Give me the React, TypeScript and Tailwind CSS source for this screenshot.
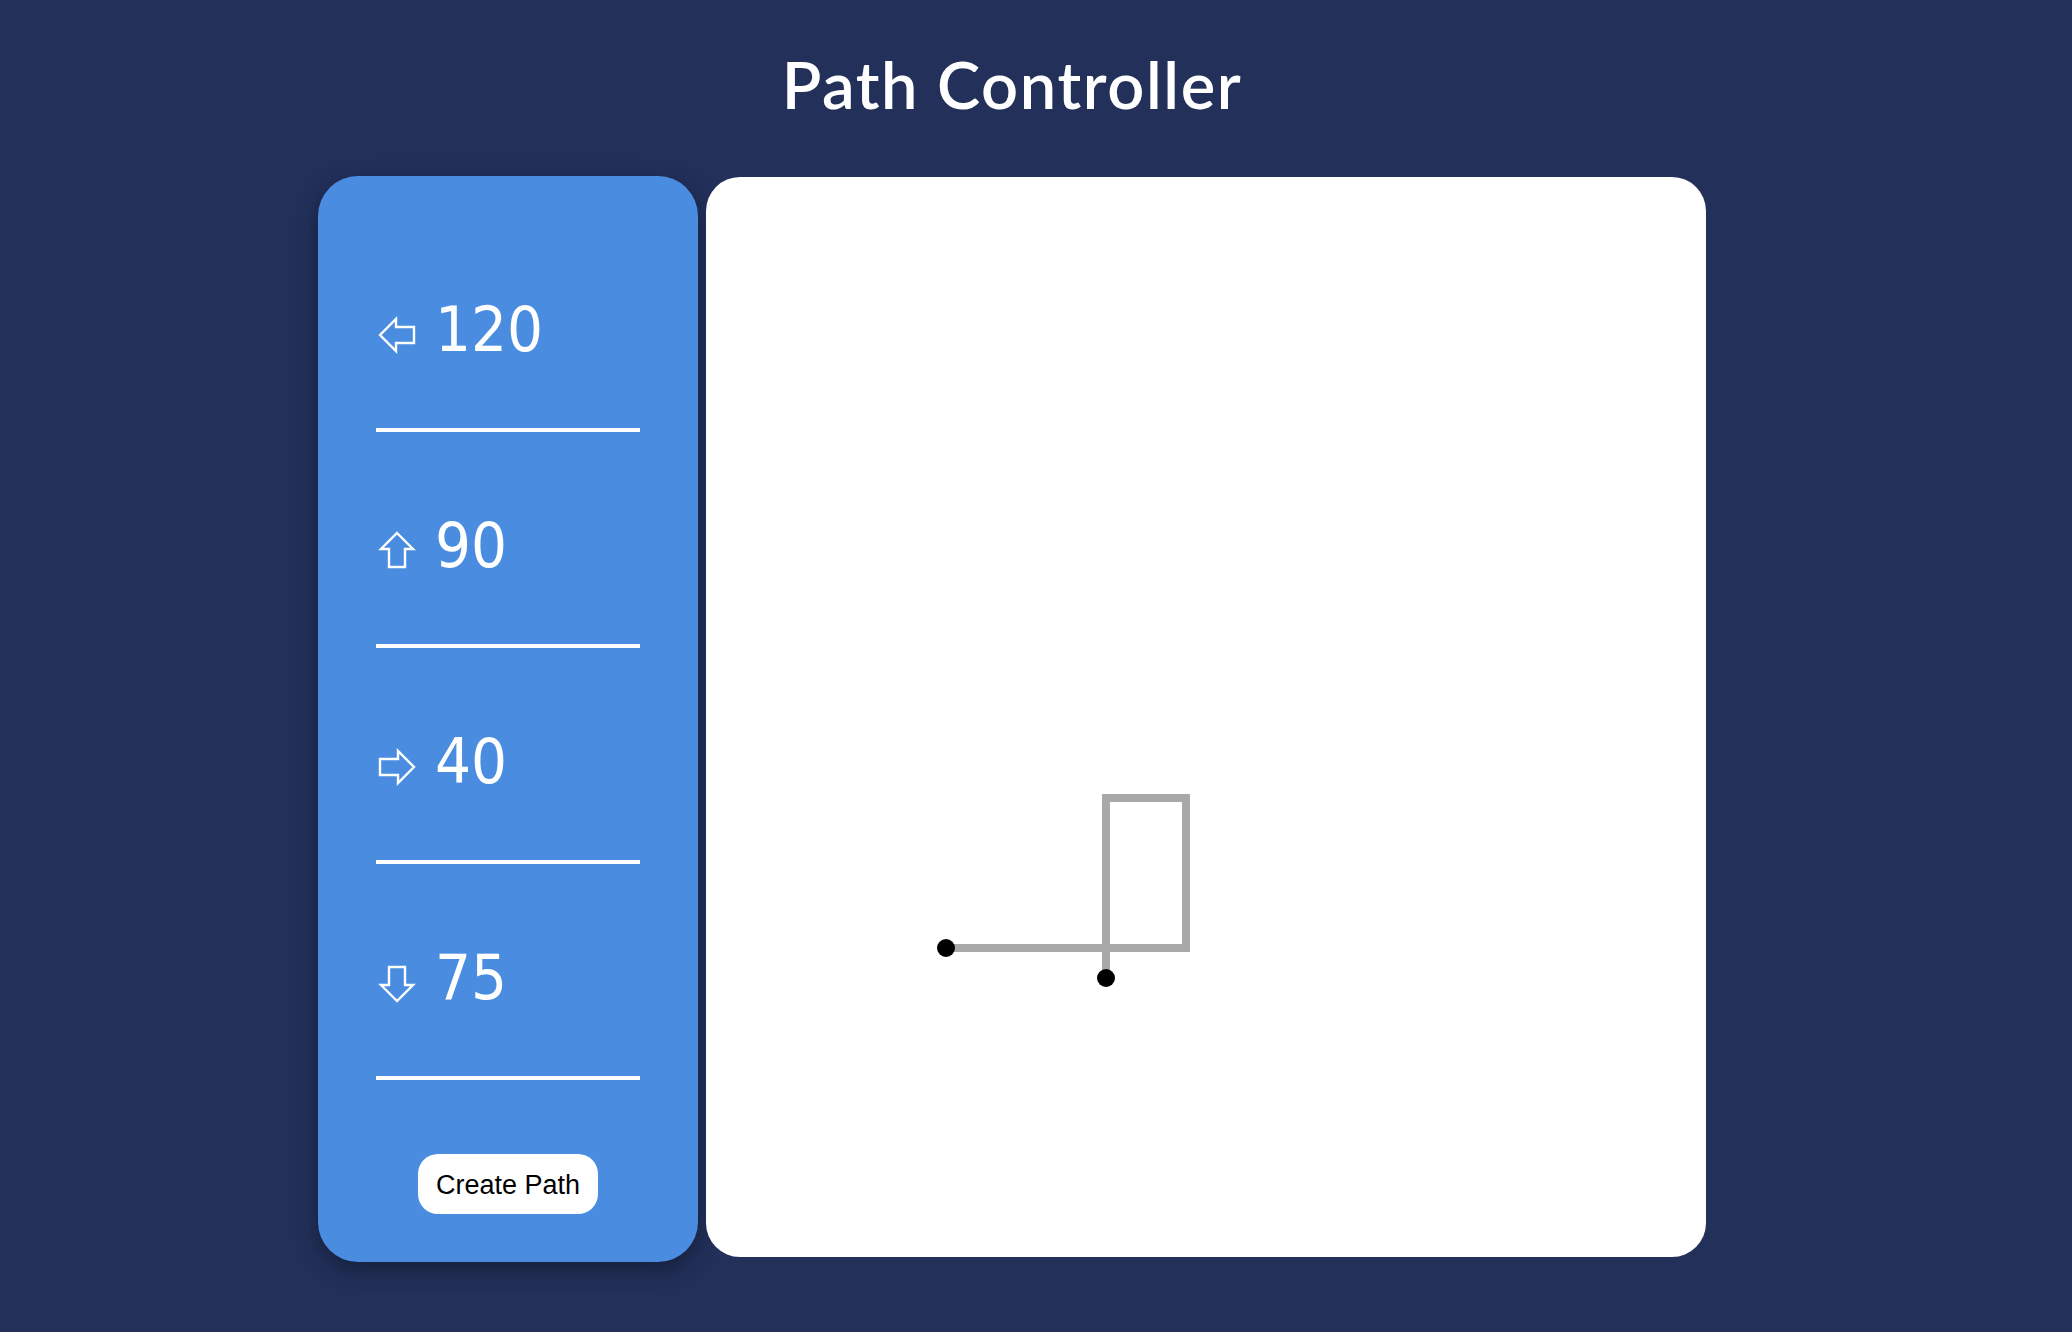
import React from "react";

type Dir = "left" | "up" | "right" | "down";

function Arrow({ dir }: { dir: Dir }) {
  const rot = dir === "left" ? 0 : dir === "up" ? 90 : dir === "right" ? 180 : 270;
  return (
    <svg width="38" height="38" viewBox="0 0 38 38" className="shrink-0">
      <g transform={`rotate(${rot} 19 19)`}>
        <path
          d="M2 19 L18 3 L18 11 L36 11 L36 27 L18 27 L18 35 Z"
          fill="none"
          stroke="white"
          strokeWidth="2.4"
          strokeLinejoin="miter"
        />
      </g>
    </svg>
  );
}

const rows: { dir: Dir; value: string }[] = [
  { dir: "left", value: "120" },
  { dir: "up", value: "90" },
  { dir: "right", value: "40" },
  { dir: "down", value: "75" },
];

export default function App() {
  return (
    <div className="min-h-screen w-full bg-[#22305a]">
      <div className="ml-[318px] w-[1388px] pt-[52px]">
        <h1 className="text-center text-[65px] leading-[64px] font-semibold tracking-[1.6px] text-white [font-family:Lato,'Noto_Sans',sans-serif]">
          Path Controller
        </h1>
        <div className="mt-[60px] flex items-start">
          <div className="w-[380px] h-[1086px] shrink-0 rounded-[40px] bg-[#4a8de0] pl-[58px] pr-[58px] pt-[122px] shadow-[0_8px_22px_rgba(0,0,0,0.35)]">
            {rows.map((r, i) => (
              <div key={i} className={i === 0 ? "" : "mt-[82px]"}>
                <div className="flex items-end h-[63px]">
                  <div className={r.dir === "down" ? "mb-[6px] ml-[2px]" : r.dir === "up" ? "mb-[8px] ml-[2px]" : "mb-[7px] ml-[2px]"}>
                    <Arrow dir={r.dir} />
                  </div>
                  <span className="ml-[19px] text-[63px] leading-[63px] text-white [font-family:'DejaVu_Sans_Condensed','DejaVu_Sans',sans-serif] [font-stretch:condensed]">
                    {r.value}
                  </span>
                </div>
                <div className="mt-[67px] h-[4px] w-[264px] bg-white" />
              </div>
            ))}
            <div className="mt-[74px] flex justify-center">
              <button className="h-[60px] w-[180px] rounded-[20px] bg-white pt-[2px] text-[27px] text-black [font-family:'Liberation_Sans',Arial,sans-serif]">
                Create Path
              </button>
            </div>
          </div>
          <div className="ml-[8px] mt-[1px] w-[1000px] h-[1080px] shrink-0 rounded-[34px] bg-white">
            <svg width="1000" height="1080" viewBox="0 0 1000 1080">
              <polyline
                points="240,771 480,771 480,621 400,621 400,801"
                fill="none"
                stroke="#a9a9a9"
                strokeWidth="8"
                strokeLinejoin="miter"
              />
              <circle cx="240" cy="771" r="9" fill="black" />
              <circle cx="400" cy="801" r="9" fill="black" />
            </svg>
          </div>
        </div>
      </div>
    </div>
  );
}
